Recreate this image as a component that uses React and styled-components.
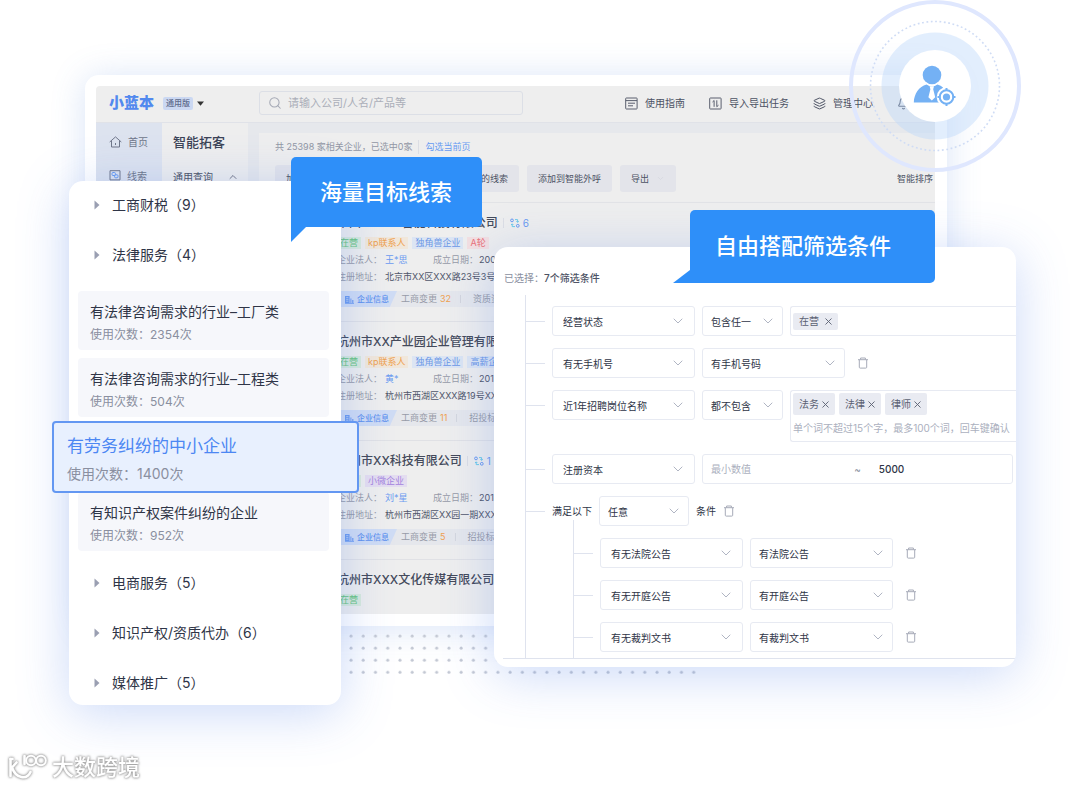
import React from 'react'
import styled, { createGlobalStyle, css } from 'styled-components'
import { Search, Layers, Bell, ChevronDown, ChevronUp, X } from 'lucide-react'

const GlobalStyle = createGlobalStyle`
    * { box-sizing: border-box; }
    body {
        margin: 0;
        background: #fff;
        font-family: Inter, "Noto Sans CJK SC", sans-serif;
        color: #2f3547;
    }
    button, input, select { font: inherit; color: inherit; margin: 0; padding: 0; }
    button { border: none; background: none; cursor: pointer; }
    a { color: inherit; text-decoration: none; }
    p, h1, h2, h3 { margin: 0; font-size: inherit; font-weight: inherit; }
`

const Stage = styled.main`
    position: relative;
    min-height: 787px;
    padding: 75px 133px 0 85px;
    overflow: hidden;
`

/* ---------- main window ---------- */

const Window = styled.section`
    padding: 11px 12px 12px 11px;
    border-radius: 14px;
    background: #fff;
    box-shadow: 0 2px 34px rgba(84, 130, 220, 0.22);
`
const Screen = styled.div`
    background: #eee;
    border-radius: 4px 4px 0 0;
    overflow: hidden;
`
const TopBar = styled.header`
    display: flex;
    align-items: center;
    height: 37px;
    padding: 0 25px 2px 0;
    border-bottom: 1px solid #e0e2e8;
`
const Brand = styled.div`
    display: flex;
    align-items: center;
    flex: 0 0 163px;
    padding-left: 13px;
    gap: 9px;
`
const Logo = styled.h1`
    color: #5289ee;
    font-size: 15px;
    line-height: 20px;
    font-weight: 900;
`
const Edition = styled.span`
    padding: 0 3px;
    margin-right: -5px;
    border-radius: 2px;
    background: #cbd8f2;
    color: #5e6b8c;
    font-size: 8px;
    line-height: 13px;
    font-weight: 500;
`
const SearchBox = styled.label`
    display: flex;
    align-items: center;
    flex: 0 1 264px;
    gap: 6px;
    height: 24px;
    padding-left: 8px;
    border: 1px solid #dcdfe6;
    border-radius: 3px;
    color: #a5a9b5;
    input {
        flex: 1;
        min-width: 0;
        border: none;
        outline: none;
        background: none;
        font-size: 11px;
    }
    input::placeholder { color: #abaeb9; opacity: 1; }
`
const TopNav = styled.nav`
    display: flex;
    align-items: center;
    gap: 24px;
    margin-left: auto;
    font-size: 10px;
    line-height: 16px;
    color: #4c5264;
    a {
        display: flex;
        align-items: center;
        gap: 7px;
        white-space: nowrap;
    }
`
const Body = styled.div`
    display: flex;
`
const Side = styled.nav`
    flex: 0 0 66px;
    display: flex;
    flex-direction: column;
    gap: 18px;
    padding: 11px 0 0 13px;
    background: #dde3ef;
    color: #70778a;
    font-size: 10px;
    line-height: 16px;
    a { display: flex; align-items: center; gap: 6px; }
`
const SubMenu = styled.nav`
    flex: 0 0 86px;
    padding: 9px 9px 0 11px;
    h2 { font-size: 13px; line-height: 20px; font-weight: 500; color: #3c4356; }
    button {
        display: flex;
        justify-content: space-between;
        align-items: center;
        width: 100%;
        margin-top: 16px;
        color: #4c5264;
        font-size: 10px;
        line-height: 18px;
    }
`
const Content = styled.div`
    flex: 1;
    min-width: 0;
    padding: 10px 0 0 11px;
    background: #e6e8ec;
`
const Sheet = styled.div`
    background: #eee;
    padding-top: 7px;
`
const Stats = styled.div`
    display: flex;
    gap: 6px;
    padding-left: 16px;
    font-size: 9px;
    line-height: 14px;
    color: #9297a5;
    a { color: #669af2; padding-left: 6px; border-left: 1px solid #dcdee4; }
`
const Toolbar = styled.div`
    display: flex;
    align-items: center;
    gap: 8px;
    padding: 11px 2px 10px 16px;
    border-bottom: 1px solid #e2e3e6;
`
const ToolButton = styled.button`
    display: flex;
    align-items: center;
    gap: 7px;
    min-width: ${p => (p.$wide ? 76 : 54)}px;
    height: 27px;
    padding: 0 11px;
    border-radius: 3px;
    background: #e3e4ea;
    color: #4c5264;
    font-size: 9px;
    line-height: 27px;
    white-space: nowrap;
`
const SortLink = styled.button`
    margin-left: auto;
    color: #4c5264;
    font-size: 9px;
    line-height: 22px;
    white-space: nowrap;
`

const Company = styled.article`
    padding: 10px 0 14px 78px;
    border-bottom: 1px solid #e0e1e5;
    white-space: nowrap;
    &:last-child { padding-bottom: 8px; border-bottom: none; }
`
const CompanyTitle = styled.h3`
    display: flex;
    align-items: center;
    gap: 12px;
    font-size: 12px;
    line-height: 20px;
    font-weight: 500;
    color: #444a5b;
    span {
        display: flex;
        align-items: center;
        gap: 3px;
        padding-left: 6px;
        margin-left: -7px;
        font-size: 10px;
        line-height: 10px;
        font-weight: 400;
        color: #6b9af0;
        border-left: 1px solid #dcdee4;
    }
`
const Tags = styled.div`
    display: flex;
    gap: 4px;
    margin-top: 4px;
`
const tones = {
    green: ['#d8eadb', '#66c47b'],
    orange: ['#f1e7da', '#efa14f'],
    blue: ['#dce5f3', '#6b97e6'],
    red: ['#f3dfe1', '#ea6f78'],
    purple: ['#e4ddf0', '#a484de'],
}
const Tag = styled.span`
    padding: 0 3px;
    font-size: 9px;
    line-height: 12px;
    background: ${p => tones[p.$tone][0]};
    color: ${p => tones[p.$tone][1]};
`
const Facts = styled.dl`
    display: grid;
    grid-template-columns: 48px 48px 46px auto;
    row-gap: 3px;
    margin: 4px 0 0;
    font-size: 9px;
    line-height: 14px;
    dt { color: #979ba8; }
    dd { margin: 0; color: #50566a; }
`
const Person = styled.dd`
    && { color: #6b9af0; }
`
const Address = styled.dd`
    grid-column: 2 / -1;
`
const InfoBar = styled.div`
    display: flex;
    align-items: center;
    margin-top: 7px;
    height: 16px;
    background: #e5e7ec;
    font-size: 9px;
    line-height: 16px;
    color: #979ba8;
    b { font-weight: 400; color: #efa14f; padding: 0 9px 0 3px; }
    i { width: 1px; height: 8px; background: #d3d6de; margin-right: 12px; }
`
const InfoHead = styled.span`
    display: flex;
    align-items: center;
    gap: 3px;
    margin-right: 4px;
    padding: 0 8px 0 8px;
    background: #cfdcf4;
    color: #5f92ee;
    font-size: 8px;
    font-weight: 500;
    clip-path: polygon(0 0, 100% 0, 88% 100%, 0 100%);
`

/* ---------- floating layers ---------- */

const DotField = styled.svg`
    position: absolute;
    left: 349px;
    top: 634px;
`
const FloatCard = styled.section`
    position: absolute;
    background: #fff;
    border-radius: 14px;
    box-shadow: 0 8px 52px rgba(70, 120, 230, 0.28);
`
const PackPanel = styled(FloatCard)`
    left: 69px;
    top: 181px;
    width: 272px;
    padding: 2px 12px 0 9px;
`
const PackGroups = styled.div`
    display: flex;
    flex-direction: column;
    gap: 6px;
`
const PackGroup = styled.button`
    display: flex;
    align-items: center;
    gap: 12px;
    padding-left: 16px;
    font-size: 14px;
    line-height: 44px;
    text-align: left;
`
const PackList = styled.div`
    display: flex;
    flex-direction: column;
    gap: 8px;
    padding: 14px 0 10px;
`
const PackCard = styled.button`
    display: block;
    padding: 10px 12px 6px;
    border-radius: 4px;
    background: #f6f7fb;
    text-align: left;
    white-space: nowrap;
    h3 { font-size: 14px; line-height: 22px; }
    p { margin-top: 3px; font-size: 12px; line-height: 18px; color: #8a8fa0; }
    ${p => p.$active && css`
        position: relative;
        margin: -4px -30px -9px -26px;
        padding: 11px 13px 6px;
        border: 2px solid #6397f2;
        background: #e8f0fe;
        h3 { font-size: 17px; line-height: 24px; color: #4c87f3; }
        p { margin-top: 5px; font-size: 14px; line-height: 22px; }
    `}
`
const Callout = styled.h2`
    position: absolute;
    border-radius: 5px;
    background: #2e8ff9;
    color: #fff;
    font-size: 22px;
    font-weight: 500;
    white-space: nowrap;
    &::after { content: ''; position: absolute; background: inherit; }
`
const LeftCallout = styled(Callout)`
    left: 222px;
    top: -24px;
    padding: 0 30px 0 29px;
    line-height: 70px;
    border-bottom-left-radius: 0;
    &::after {
        left: 0;
        top: 100%;
        width: 15px;
        height: 15px;
        clip-path: polygon(0 0, 100% 0, 0 100%);
    }
`
const RightCallout = styled(Callout)`
    left: 196px;
    top: -37px;
    padding: 0 44px 0 25px;
    line-height: 73px;
    border-bottom-left-radius: 0;
    &::after {
        right: 100%;
        bottom: 0;
        width: 17px;
        height: 13px;
        clip-path: polygon(100% 0, 100% 100%, 0 100%);
    }
`

const FilterPanel = styled(FloatCard)`
    left: 494px;
    right: 64px;
    top: 247px;
    font-size: 10px;
`
const FilterClip = styled.div`
    padding: 21px 0 8px;
    border-radius: 14px;
    overflow: hidden;
`
const Selected = styled.p`
    padding-left: 10px;
    line-height: 20px;
    color: #8a8fa0;
    b { font-weight: 500; color: #4c5264; }
`
const Tree = styled.form`
    margin: 7px 0 0 9px;
    padding-left: 22px;
    border-bottom: 1px solid #dfe3ee;
`
const Branch = styled.div`
    display: flex;
    flex-direction: column;
    gap: 12px;
    padding: 11px 0 6px;
    border-left: 1px solid #dfe3ee;
`
const SubBranch = styled(Branch)`
    margin: -18px 0 -6px 47px;
    padding-top: 18px;
`
const Row = styled.div`
    display: flex;
    align-items: flex-start;
    gap: 7px;
    line-height: 30px;
    white-space: nowrap;
    &::before {
        content: '';
        flex: 0 0 19px;
        height: 1px;
        margin-top: 15px;
        background: #dfe3ee;
    }
`
const SelectBox = styled.label`
    display: grid;
    align-items: center;
    flex: 0 0 ${p => p.$width}px;
    height: 30px;
    border: 1px solid #e7eaf2;
    border-radius: 3px;
    select, svg { grid-area: 1 / 1; }
    select {
        appearance: none;
        width: 100%;
        height: 28px;
        padding-left: ${p => (p.$lead ? 10 : 8)}px;
        border: none;
        outline: none;
        background: none;
    }
    svg { justify-self: end; margin-right: ${p => (p.$lead ? 8 : 6)}px; color: #b0b5c3; pointer-events: none; }
`
const TokenBox = styled.div`
    flex: 1;
    min-width: 0;
    padding: 2px 0 0 2px;
    min-height: 30px;
    border: 1px solid #e7eaf2;
    border-right: none;
    border-radius: 3px 0 0 3px;
    overflow: hidden;
    input {
        display: block;
        width: 100%;
        height: 26px;
        border: none;
        outline: none;
        background: none;
    }
    input::placeholder { color: #abb0be; opacity: 1; }
`
const Tokens = styled.div`
    display: flex;
    gap: 4px;
`
const Token = styled.span`
    display: flex;
    align-items: center;
    gap: ${p => (p.$small ? 4 : 1)}px;
    margin: ${p => (p.$small ? 4 : 0)}px 0;
    padding: 0 4px 0 6px;
    border-radius: 2px;
    background: #e9ebf2;
    color: #5b6173;
    line-height: ${p => (p.$small ? 17 : 22)}px;
    button { display: flex; }
`
const RangeBox = styled.div`
    display: flex;
    flex: 1;
    min-width: 0;
    height: 30px;
    margin-right: 3px;
    padding-left: 8px;
    border: 1px solid #e7eaf2;
    border-radius: 3px;
    line-height: 28px;
    color: #8a8fa0;
    input { flex: 1 1 144px; min-width: 0; border: none; outline: none; background: none; }
    input + span { padding-right: 18px; }
    input:last-child { flex-basis: 134px; color: #2f3547; font-weight: 500; }
    input::placeholder { color: #abb0be; opacity: 1; }
`
const IconButton = styled.button`
    display: flex;
    align-items: center;
    justify-content: center;
    flex: 0 0 ${p => (p.$tight ? 12 : 22)}px;
    height: 30px;
`
const Badge = styled.svg`
    position: absolute;
    right: 59px;
    top: 0;
`
const Watermark = styled.footer`
    position: absolute;
    left: 8px;
    bottom: 6px;
    display: flex;
    align-items: center;
    gap: 4px;
    color: #fff;
    font-size: 22px;
    line-height: 28px;
    font-weight: 500;
    filter: drop-shadow(0 0 1px #999) drop-shadow(0 0 1px #b5b5b5);
`

/* ---------- icons ---------- */

const GuideIcon = () => (
    <svg width="13" height="13" viewBox="0 0 13 13" fill="none" stroke="#5a5f6e">
        <rect x="0.7" y="1" width="11.4" height="11" rx="0.6" />
        <path d="M0.7 3.6h11.4M3 6.2h7M3 8.8h5" />
    </svg>
)
const TransferIcon = () => (
    <svg width="13" height="13" viewBox="0 0 13 13" fill="none" stroke="#5a5f6e">
        <rect x="0.7" y="1" width="11.4" height="11" rx="0.6" />
        <path d="M3.5 5l1.6-1.5v6.3M7.8 3.3v6.4l1.7-1.5" />
    </svg>
)
const HomeIcon = () => (
    <svg width="13" height="12" viewBox="0 0 13 12" fill="none" stroke="#70778a">
        <path d="M0.7 6L6.5 0.9 12.3 6M2.5 5v6h8V5M6.5 7v2" strokeLinejoin="round" />
    </svg>
)
const LeadIcon = () => (
    <svg width="12" height="12" viewBox="0 0 12 12" fill="none" stroke="#70778a">
        <path d="M1 0.7h10v9.2H1zM0.5 11.5h11" />
        <rect x="3" y="2.5" width="3.4" height="3" rx="1" stroke="#669af2" />
        <rect x="5.600" y="4.800" width="3.4" height="3" rx="1" stroke="#669af2" />
    </svg>
)
const RelationIcon = () => (
    <svg width="10" height="10" viewBox="0 0 10 10" fill="none">
        <circle cx="2" cy="2.4" r="1.4" stroke="#6b9af0" />
        <circle cx="7.8" cy="7.8" r="1.4" stroke="#6b9af0" />
        <path d="M5 1.6h2.6v2.6M6.4 3.2l1.2 1.2 1.2-1.2M5 8.6H2.2V6M1 7l1.2-1.2L3.4 7" stroke="#6cc9e8" />
    </svg>
)
const BuildingIcon = () => (
    <svg width="9" height="9" viewBox="0 0 9 9" fill="#6d9cf0">
        <path d="M0 8V1h4.6v7zM5.4 8V3.4h1V8zM7.2 8V5h1.2v3zM0 8h9v.8H0z" />
        <path d="M1.2 2.6h2.2M1.2 4.4h2.2M1.2 6.2h2.2" stroke="#cfdcf4" strokeWidth="0.7" />
    </svg>
)
const TrashIcon = () => (
    <svg width="12" height="12" viewBox="0 0 12 12" fill="none" stroke="#a7abb8">
        <path d="M1 2.7h10M3.6 2.5V1h4.8v1.5M2.3 2.9v7.3q0 .9.9.9h5.6q.9 0 .9-.9V2.9" />
    </svg>
)
const Triangle = () => (
    <svg width="6" height="10" viewBox="0 0 6 10" fill="#9a9fb2">
        <path d="M0.5 0.5L5.5 5 0.5 9.5z" />
    </svg>
)
const CaretDown = () => (
    <svg width="7" height="5" viewBox="0 0 7 5" fill="#333"><path d="M0 0.5h7L3.5 4.8z" /></svg>
)

/* ---------- data ---------- */

const companies = [
    {
        name: '中国XX人工智能科技有限公司', relations: 6,
        tags: [['在营', 'green'], ['kp联系人', 'orange'], ['独角兽企业', 'blue'], ['A轮', 'red']],
        person: '王*思', date: '2003-06-12', address: '北京市XX区XXX路23号3号楼', changes: 32, next: '资质资格',
    },
    {
        name: '杭州市XX产业园企业管理有限公司',
        tags: [['在营', 'green'], ['kp联系人', 'orange'], ['独角兽企业', 'blue'], ['高薪企业', 'blue']],
        person: '黄*', date: '2015-03-18', address: '杭州市西湖区XXX路19号XX大厦', changes: 11, next: '招投标',
    },
    {
        name: '杭州市XX科技有限公司', relations: 1,
        tags: [['在营', 'green'], ['小微企业', 'purple']],
        person: '刘*星', date: '2018-09-05', address: '杭州市西湖区XX园一期XXX室', changes: 5, next: '招投标',
    },
    { name: '杭州市XXX文化传媒有限公司', tags: [['在营', 'green']] },
]
const packs = [
    { title: '有法律咨询需求的行业–工厂类', count: 2354 },
    { title: '有法律咨询需求的行业–工程类', count: 504 },
    { title: '有劳务纠纷的中小企业', count: 1400, active: true },
    { title: '有知识产权案件纠纷的企业', count: 952 },
]
const courtFilters = [
    ['有无法院公告', '有法院公告'],
    ['有无开庭公告', '有开庭公告'],
    ['有无裁判文书', '有裁判文书'],
]

const Select = ({ value, label, width = 143, lead }) => (
    <SelectBox $width={width} $lead={lead}>
        <select aria-label={label || value} defaultValue={value}>
            <option>{value}</option>
        </select>
        <ChevronDown size={16} strokeWidth={1.5} />
    </SelectBox>
)
const Remove = ({ tight }) => (
    <IconButton type="button" aria-label="删除" $tight={tight}><TrashIcon /></IconButton>
)
const TokenItem = ({ text, small }) => (
    <Token $small={small}>
        {text}
        <button type="button" aria-label={`移除${text}`}><X size={11} strokeWidth={2} /></button>
    </Token>
)

const CompanyItem = ({ item }) => (
    <Company>
        <CompanyTitle>
            {item.name}
            {item.relations && <span><RelationIcon />{item.relations}</span>}
        </CompanyTitle>
        <Tags>
            {item.tags.map(([text, tone]) => <Tag key={text} $tone={tone}>{text}</Tag>)}
        </Tags>
        {item.person && (
            <>
                <Facts>
                    <dt>企业法人：</dt>
                    <Person>{item.person}</Person>
                    <dt>成立日期：</dt>
                    <dd>{item.date}</dd>
                    <dt>注册地址：</dt>
                    <Address>{item.address}</Address>
                </Facts>
                <InfoBar>
                    <InfoHead><BuildingIcon />企业信息</InfoHead>
                    工商变更<b>{item.changes}</b><i />{item.next}
                </InfoBar>
            </>
        )}
    </Company>
)

const MainWindow = () => (
    <Window>
        <Screen>
            <TopBar>
                <Brand>
                    <Logo>小蓝本</Logo>
                    <Edition>通用版</Edition>
                    <CaretDown />
                </Brand>
                <SearchBox>
                    <Search size={14} strokeWidth={1.8} />
                    <input aria-label="搜索" placeholder="请输入公司/人名/产品等" />
                </SearchBox>
                <TopNav>
                    <a href="#guide"><GuideIcon />使用指南</a>
                    <a href="#tasks"><TransferIcon />导入导出任务</a>
                    <a href="#admin"><Layers size={13} strokeWidth={1.8} />管理中心</a>
                    <a href="#notice" aria-label="通知"><Bell size={13} strokeWidth={2} /></a>
                </TopNav>
            </TopBar>
            <Body>
                <Side>
                    <a href="#home"><HomeIcon />首页</a>
                    <a href="#leads"><LeadIcon />线索</a>
                </Side>
                <SubMenu>
                    <h2>智能拓客</h2>
                    <button type="button">通用查询<ChevronUp size={12} strokeWidth={1.5} /></button>
                </SubMenu>
                <Content>
                    <Sheet>
                        <Stats>
                            共 25398 家相关企业，已选中0家
                            <a href="#select">勾选当前页</a>
                        </Stats>
                        <Toolbar>
                            <ToolButton $wide>加入</ToolButton>
                            <ToolButton $wide aria-label="加入我的客户" />
                            <ToolButton $wide>加入我的线索</ToolButton>
                            <ToolButton>添加到智能外呼</ToolButton>
                            <ToolButton>导出<ChevronDown size={9} color="#d4d6de" /></ToolButton>
                            <SortLink>智能排序</SortLink>
                        </Toolbar>
                        {companies.map(item => <CompanyItem key={item.name} item={item} />)}
                    </Sheet>
                </Content>
            </Body>
        </Screen>
    </Window>
)

const Packs = () => (
    <PackPanel>
        <PackGroups>
            <PackGroup><Triangle />工商财税（9）</PackGroup>
            <PackGroup><Triangle />法律服务（4）</PackGroup>
        </PackGroups>
        <PackList>
            {packs.map(pack => (
                <PackCard key={pack.title} $active={pack.active}>
                    <h3>{pack.title}</h3>
                    <p>使用次数：{pack.count}次</p>
                </PackCard>
            ))}
        </PackList>
        <PackGroups>
            <PackGroup><Triangle />电商服务（5）</PackGroup>
            <PackGroup><Triangle />知识产权/资质代办（6）</PackGroup>
            <PackGroup><Triangle />媒体推广（5）</PackGroup>
        </PackGroups>
        <LeftCallout>海量目标线索</LeftCallout>
    </PackPanel>
)

const Filters = () => (
    <FilterPanel>
        <FilterClip>
            <Selected>已选择：<b>7个筛选条件</b></Selected>
            <Tree>
                <Branch>
                    <Row>
                        <Select lead value="经营状态" />
                        <Select width={81} value="包含任一" />
                        <TokenBox>
                            <Tokens><TokenItem small text="在营" /></Tokens>
                        </TokenBox>
                    </Row>
                    <Row>
                        <Select lead value="有无手机号" />
                        <Select value="有手机号码" />
                        <Remove />
                    </Row>
                    <Row>
                        <Select lead value="近1年招聘岗位名称" />
                        <Select width={81} value="都不包含" />
                        <TokenBox>
                            <Tokens>
                                <TokenItem text="法务" />
                                <TokenItem text="法律" />
                                <TokenItem text="律师" />
                            </Tokens>
                            <input aria-label="关键词" placeholder="单个词不超过15个字，最多100个词，回车键确认" />
                        </TokenBox>
                    </Row>
                    <Row>
                        <Select lead value="注册资本" />
                        <RangeBox>
                            <input aria-label="最小数值" placeholder="最小数值" />
                            <span>~</span>
                            <input aria-label="最大数值" defaultValue="5000" />
                        </RangeBox>
                    </Row>
                    <Row>
                        满足以下
                        <Select width={90} value="任意" />
                        条件
                        <Remove tight />
                    </Row>
                    <SubBranch>
                        {courtFilters.map(([field, value]) => (
                            <Row key={field}>
                                <Select lead value={field} />
                                <Select value={value} />
                                <Remove />
                            </Row>
                        ))}
                    </SubBranch>
                </Branch>
            </Tree>
        </FilterClip>
        <RightCallout>自由搭配筛选条件</RightCallout>
    </FilterPanel>
)

const TargetBadge = () => (
    <Badge width="172" height="172" viewBox="0 0 172 172" fill="none">
        <circle cx="86" cy="86" r="84" stroke="#dfe7fe" strokeWidth="4" />
        <circle cx="86" cy="86" r="64.5" stroke="#cfdcf5" strokeWidth="1.6" strokeDasharray="1.8 2.6" />
        <circle cx="86" cy="86" r="53.5" fill="#b9d7fb" fillOpacity="0.42" />
        <circle cx="86" cy="86" r="36" fill="#fff" />
        <g fill="#74b1f4">
            <circle cx="83" cy="75" r="9.3" />
            <path d="M64.800 102.500C65 94 70 86.500 77.500 84.500Q83 88.500 88.500 84.500Q92 85.500 94 87.500L90 102.500z" />
            <path d="M80.600 86.200h4.400l-.8 3 2 8-3.400 3.400-3.400-3.400 2-8z" fill="#fff" />
            <circle cx="97.500" cy="97" r="9.800" fill="#fff" />
            <circle cx="97.500" cy="97" r="6.800" stroke="#74b1f4" strokeWidth="2" fill="#fff" />
            <circle cx="97.500" cy="97" r="3.600" />
            <path d="M97.500 88v3M97.500 103v3M88.500 97h3M103.500 97h3" stroke="#74b1f4" strokeWidth="2" />
        </g>
    </Badge>
)

const App = () => (
    <>
        <GlobalStyle />
        <Stage>
            <MainWindow />
            <DotField width="350" height="42">
                <defs>
                    <pattern id="dots" width="12.24" height="12.1" patternUnits="userSpaceOnUse">
                        <circle cx="2" cy="2" r="1.5" fill="#c3c8d3" />
                    </pattern>
                </defs>
                <rect width="348" height="42" fill="url(#dots)" />
            </DotField>
            <Filters />
            <Packs />
            <TargetBadge />
            <Watermark>
                <svg width="40" height="28" viewBox="0 0 40 28" fill="none" stroke="#fff" strokeWidth="2.6" strokeLinecap="round">
                    <path d="M2.500 6v17M8.500 9.500L4 14.500C8 26 19 27 22.500 19" />
                    <path d="M2.500 6h2M16.500 3v8" />
                    <circle cx="23" cy="7.500" r="4.800" strokeWidth="2" />
                    <circle cx="33" cy="7.500" r="4.800" strokeWidth="2" />
                </svg>
                大数跨境
            </Watermark>
        </Stage>
    </>
)

export default App
